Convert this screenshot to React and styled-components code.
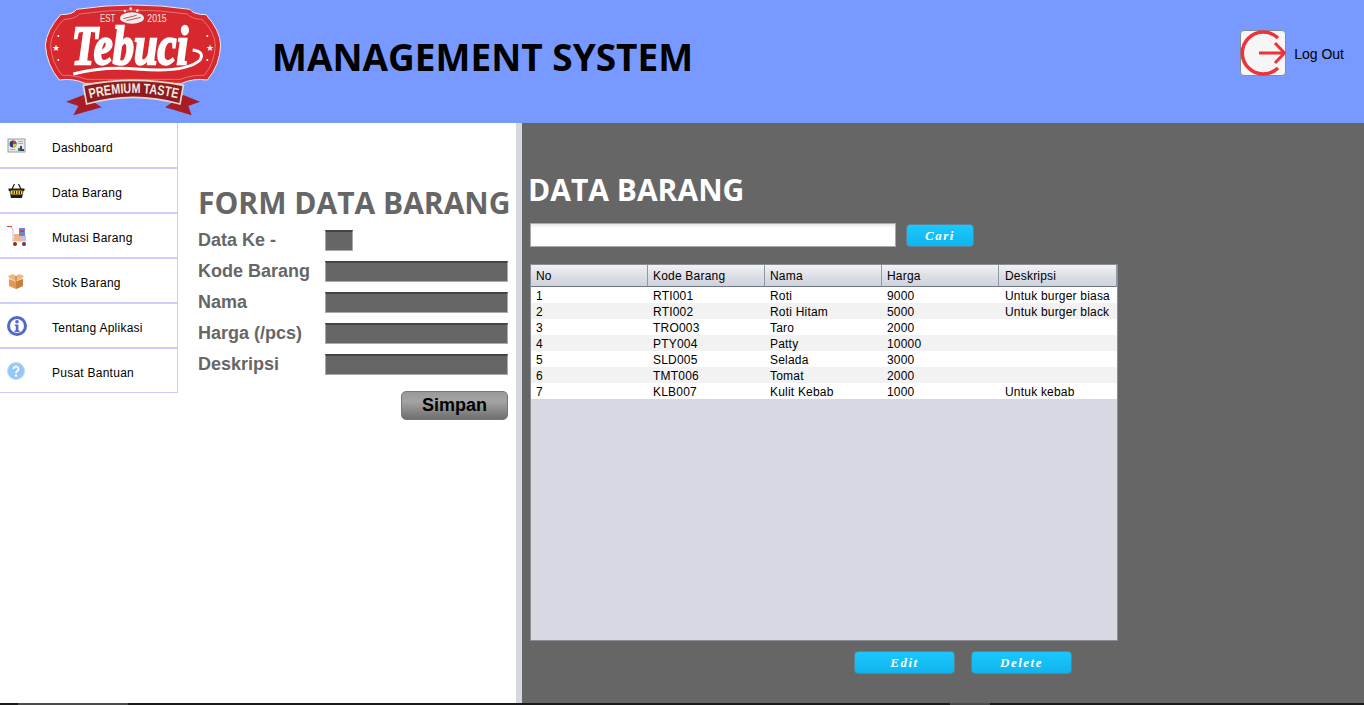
import React from 'react';
import styled, { createGlobalStyle } from 'styled-components';

const GlobalStyle = createGlobalStyle`
html, body {
  margin: 0;
  height: 705px;
  overflow: hidden;
  background: #fff;
  font-family: "Liberation Sans", Arial, sans-serif;
}
`;

const Page = styled.div`
width: 1364px;
height: 705px;
display: flex;
flex-direction: column;
`;

const Header = styled.header`
height: 123px;
flex: none;
display: flex;
align-items: flex-start;
background: #7899ff;
padding-left: 30px;
box-sizing: border-box;
`;

const AppTitle = styled.h1`
margin: 36px 0 0 32px;
font: bold 37px/42px "Open Sans", sans-serif;
color: #000;
white-space: nowrap;
`;

const LogOut = styled.div`
margin: 30px 20px 0 auto;
display: flex;
align-items: center;
gap: 8px;
font-size: 14px;
color: #000;
`;

const LogOutLabel = styled.span`
padding-top: 2px;
`;

const LogOutIcon = styled.div`
width: 46px;
height: 46px;
box-sizing: border-box;
background: #f6f6f6;
border: 1px solid #7f8f99;
border-radius: 4px;
`;

const Main = styled.main`
height: 580px;
flex: none;
display: flex;
`;

const Sidebar = styled.nav`
width: 178px;
flex: none;
align-self: flex-start;
box-sizing: border-box;
padding-top: 1px;
border-right: 1px solid #ccccff;
`;

const NavItem = styled.div`
height: 45px;
box-sizing: border-box;
display: flex;
align-items: center;
padding-top: 1px;
font-size: 12px;
letter-spacing: 0.25px;
color: #000;
border-bottom: 2px solid #ccccff;
&:last-child {
  height: 44px;
  border-bottom-width: 1px;
}
`;

const NavIcon = styled.span`
width: 52px;
flex: none;
padding-left: 7px;
box-sizing: border-box;
display: flex;
`;

const NavLabel = styled.span`
padding-top: 3px;
`;

const FormPanel = styled.section`
width: 338px;
flex: none;
box-sizing: border-box;
padding: 62px 8px 0 20px;
background: #fff;
`;

const FormTitle = styled.h2`
margin: 0 0 9px;
font: bold 30px/36px "Open Sans", sans-serif;
color: #666;
white-space: nowrap;
`;

const FormRow = styled.div`
display: flex;
align-items: center;
height: 21px;
margin-bottom: 10px;
`;

const FormLabel = styled.label`
width: 127px;
flex: none;
font-size: 18px;
font-weight: bold;
color: #666;
white-space: nowrap;
`;

const FormInput = styled.input`
width: ${({ $small }) => ($small ? '28px' : '183px')};
height: 21px;
box-sizing: border-box;
padding: 0;
background: #666;
border: 1px solid #aaa;
border-top: 2px solid #444;
outline: none;
`;

const SaveRow = styled.div`
display: flex;
justify-content: flex-end;
margin-top: 16px;
`;

const SaveButton = styled.button`
width: 107px;
height: 29px;
padding: 0;
font: bold 18px "Liberation Sans", sans-serif;
color: #000;
background: linear-gradient(#999, #a4a4a4 35%, #6e6e6e);
border: 1px solid #777;
border-radius: 5px;
`;

const Divider = styled.div`
width: 6px;
flex: none;
background: #d6d9e2;
`;

const DataPanel = styled.section`
flex: 1;
box-sizing: border-box;
padding: 49px 0 0 8px;
background: #666;
`;

const DataTitle = styled.h2`
margin: 0 0 15px -2px;
font: bold 30px/36px "Open Sans", sans-serif;
color: #fff;
white-space: nowrap;
`;

const SearchRow = styled.div`
display: flex;
align-items: center;
gap: 10px;
height: 24px;
margin-bottom: 17px;
`;

const SearchInput = styled.input`
width: 366px;
height: 24px;
box-sizing: border-box;
padding: 0;
background: linear-gradient(#e8e8e8, #fff 4px);
border: 1px solid #aaa;
outline: none;
`;

const BlueButton = styled.button`
width: ${({ $width }) => $width}px;
height: 23px;
padding: 1px 0 0;
font: italic bold 13px "Liberation Serif", serif;
letter-spacing: 1.5px;
color: #fff;
background: linear-gradient(#1ac8ff, #10b4ec);
border: 1px solid #5c8296;
border-radius: 4px;
`;

const TableBox = styled.div`
width: 588px;
height: 377px;
box-sizing: border-box;
background: #d6d9e2;
border: 1px solid #8c8c96;
`;

const Table = styled.table`
width: 586px;
table-layout: fixed;
border-collapse: separate;
border-spacing: 0;
font-size: 12px;
letter-spacing: 0.2px;
color: #000;
`;

const HeadCell = styled.th`
width: 117px;
height: 22px;
box-sizing: border-box;
padding: 0 0 0 5px;
text-align: left;
font-weight: normal;
white-space: nowrap;
background: linear-gradient(#f1f2f5, #dcdee5 55%, #cfd2db);
border-right: 1px solid #8d99a6;
border-bottom: 1px solid #6c7683;
&:last-child {
  width: 118px;
  padding-left: 6px;
}
`;

const Row = styled.tr`
height: 16px;
background: ${({ $odd }) => ($odd ? '#f2f2f2' : '#fff')};
`;

const Cell = styled.td`
padding: 2px 0 0 5px;
white-space: nowrap;
overflow: hidden;
line-height: 14px;
&:last-child {
  padding-left: 6px;
}
`;

const TableActions = styled.div`
display: flex;
gap: 16px;
margin: 10px 0 0 324px;
`;

const Taskbar = styled.footer`
height: 2px;
flex: none;
display: flex;
background: #1a1a1a;
`;

const TaskSlot = styled.span`
width: ${({ $width }) => $width}px;
margin-left: ${({ $left }) => $left}px;
background: #4a4a4a;
`;

const DashboardIcon = () => (
  <svg width="20" height="16" viewBox="0 0 20 16">
    <rect x="1" y="1" width="17" height="13" fill="#e9e9e9" stroke="#9a9a9a" />
    <circle cx="6" cy="6" r="3.5" fill="#2f3f7a" />
    <path d="M6 6V2.5A3.5 3.5 0 0 1 9.5 6z" fill="#d33" />
    <path d="M6 6h3.5A3.5 3.5 0 0 1 6 9.5z" fill="#e2c033" />
    <rect x="11" y="3" width="5" height="1" fill="#aaa" />
    <rect x="11" y="5" width="5" height="1" fill="#aaa" />
    <rect x="11" y="10" width="2" height="3" fill="#3a8a4a" />
    <rect x="13" y="8" width="2" height="5" fill="#333f8a" />
    <rect x="15" y="11" width="2" height="2" fill="#444" />
    <rect x="3" y="11" width="5" height="1" fill="#aaa" />
  </svg>
);

const BasketIcon = () => (
  <svg width="19" height="16" viewBox="0 0 19 16">
    <path d="M5 6L7.5 1M14 6L11.500 1" stroke="#222" strokeWidth="1.2" fill="none" />
    <path d="M1.500 5.500h16v2l-1 .500-1.500 7H4l-1.500-7-1-.5z" fill="#1d1d1d" />
    <rect x="3.500" y="7.500" width="12" height="4" rx="1" fill="#f4cf2d" />
    <path d="M6 8v3M8.500 8v3M11 8v3M13.500 8v3" stroke="#1d1d1d" />
  </svg>
);

const CartIcon = () => (
  <svg width="22" height="22" viewBox="0 0 22 22">
    <rect x="0" y="1" width="5" height="1" fill="#e23b3b" />
    <path d="M4 2l2 3v11h13" stroke="#c8ccd8" strokeWidth="1.200" fill="none" />
    <rect x="7" y="9" width="8" height="7" fill="#f0b588" />
    <rect x="12" y="3" width="6" height="8" fill="#6a86d8" />
    <rect x="13" y="5" width="4" height="2" fill="#e23b3b" />
    <rect x="15" y="11" width="4" height="5" fill="#b4c6ea" />
    <circle cx="8" cy="19" r="2" fill="#8c2a33" />
    <circle cx="17" cy="19" r="2" fill="#8c2a33" />
  </svg>
);

const BoxIcon = () => (
  <svg width="18" height="16" viewBox="0 0 18 16">
    <path d="M2 6l7 2.500L16 6v7l-7 3-7-3z" fill="#e09a55" />
    <path d="M9 8.500L16 6v7l-7 3z" fill="#c9803c" />
    <path d="M1 3l5-2 3 2 3-2 5 2-2.500 3L9 8 3.500 6z" fill="#f0b67c" />
    <path d="M9 3v5" stroke="#b97636" />
  </svg>
);

const InfoIcon = () => (
  <svg width="20" height="20" viewBox="0 0 20 20">
    <circle cx="10" cy="10" r="8.500" fill="#fff" stroke="#5468c8" strokeWidth="3" />
    <circle cx="10" cy="5.800" r="1.800" fill="#5468c8" />
    <path d="M7.800 8.500h3.600v6h1.200V16H7.500v-1.500h1.300V10H7.800z" fill="#5468c8" />
  </svg>
);

const HelpIcon = () => (
  <svg width="18" height="18" viewBox="0 0 18 18">
    <circle cx="9" cy="9" r="8.500" fill="#93c8f8" stroke="#b9dcfb" />
    <path d="M6.500 7a2.500 2.500 0 1 1 3.800 2.100c-.9.600-1.300 1-1.300 2.100" stroke="#fff" strokeWidth="1.800" fill="none" />
    <circle cx="9" cy="13.500" r="1.200" fill="#fff" />
  </svg>
);

const LogoutGlyph = () => (
  <svg width="46" height="46" viewBox="0 0 46 46" style={{ display: 'block', margin: '-1px', overflow: 'visible' }}>
    <path d="M38 8A21 21 0 1 0 38 38" stroke="#ee3338" strokeWidth="3.500" fill="none" />
    <path d="M19 23h24M35 13l9.500 10L35 33" stroke="#ee3338" strokeWidth="3" fill="none" />
  </svg>
);

// coordinates follow the 3x crop of the header
const Logo = () => (
  <svg width="210" height="123" viewBox="0 0 630 369">
    <path d="M140 28Q310 2 480 28Q490 44 528 44Q570 90 572 135Q570 195 532 240Q490 234 455 250L165 250Q130 234 88 240Q50 195 46 135Q50 90 92 44Q130 44 140 28z" fill="#d6282e" stroke="#f3e8e0" strokeWidth="3" />
    <path d="M148 42Q310 18 472 42Q486 58 516 58Q554 95 556 135Q554 188 523 226Q490 224 450 238H170Q130 224 97 226Q64 188 62 135Q64 95 102 58Q134 58 148 42z" fill="none" stroke="#ec9a90" strokeWidth="2" />
    <path d="M160 285L108 305L145 318L130 346L215 322z" fill="#a81c26" />
    <path d="M460 285L510 305L475 318L485 346L405 322z" fill="#a81c26" />
    <path d="M160 256Q310 226 460 256L450 312Q310 272 170 312z" fill="#8f1a22" stroke="#e8d9c8" strokeWidth="5" />
    <ellipse cx="306" cy="54" rx="36" ry="17" fill="#eee" />
    <path d="M280 56l40-10M290 62l42-10" stroke="#c65050" strokeWidth="3" />
    <circle cx="285" cy="33" r="4" fill="#eee" />
    <circle cx="302" cy="26" r="4" fill="#eee" />
    <circle cx="322" cy="32" r="4" fill="#eee" />
    <text x="210" y="66" fontFamily="Liberation Sans" fontSize="30" fill="#f3e6da" textLength="46" lengthAdjust="spacingAndGlyphs">EST</text>
    <text x="352" y="66" fontFamily="Liberation Sans" fontSize="30" fill="#f3e6da" textLength="58" lengthAdjust="spacingAndGlyphs">2015</text>
    <text x="125" y="192" fontFamily="Liberation Serif" fontStyle="italic" fontWeight="bold" fontSize="165" fill="#fff" stroke="#fff" strokeWidth="7" textLength="350" lengthAdjust="spacingAndGlyphs">Tebuci</text>
    <path d="M130 222Q220 198 330 208Q470 218 510 180Q525 155 488 150" fill="none" stroke="#fff" strokeWidth="9" />
    <text x="66" y="152" fontSize="26" fill="#fff">★</text>
    <text x="528" y="154" fontSize="26" fill="#fff">★</text>
    <circle cx="85" cy="108" r="3" fill="#fff" />
    <circle cx="85" cy="180" r="3" fill="#fff" />
    <circle cx="532" cy="108" r="3" fill="#fff" />
    <circle cx="532" cy="180" r="3" fill="#fff" />
    <path id="logo-arc" d="M180 296Q310 262 445 296" fill="none" />
    <text fontFamily="Liberation Sans" fontWeight="bold" fontSize="42" fill="#f6e9dc">
      <textPath href="#logo-arc" textLength="265" lengthAdjust="spacingAndGlyphs">PREMIUM TASTE</textPath>
    </text>
  </svg>
);

const navItems = [
  { label: 'Dashboard', icon: <DashboardIcon /> },
  { label: 'Data Barang', icon: <BasketIcon /> },
  { label: 'Mutasi Barang', icon: <CartIcon /> },
  { label: 'Stok Barang', icon: <BoxIcon /> },
  { label: 'Tentang Aplikasi', icon: <InfoIcon /> },
  { label: 'Pusat Bantuan', icon: <HelpIcon /> },
];

const formFields = [
  { label: 'Data Ke -', small: true },
  { label: 'Kode Barang' },
  { label: 'Nama' },
  { label: 'Harga (/pcs)' },
  { label: 'Deskripsi' },
];

const columns = ['No', 'Kode Barang', 'Nama', 'Harga', 'Deskripsi'];

const rows = [
  ['1', 'RTI001', 'Roti', '9000', 'Untuk burger biasa'],
  ['2', 'RTI002', 'Roti Hitam', '5000', 'Untuk burger black'],
  ['3', 'TRO003', 'Taro', '2000', ''],
  ['4', 'PTY004', 'Patty', '10000', ''],
  ['5', 'SLD005', 'Selada', '3000', ''],
  ['6', 'TMT006', 'Tomat', '2000', ''],
  ['7', 'KLB007', 'Kulit Kebab', '1000', 'Untuk kebab'],
];

const App = () => (
  <Page>
    <GlobalStyle />
    <Header>
      <Logo />
      <AppTitle>MANAGEMENT SYSTEM</AppTitle>
      <LogOut>
        <LogOutIcon><LogoutGlyph /></LogOutIcon>
        <LogOutLabel>Log Out</LogOutLabel>
      </LogOut>
    </Header>
    <Main>
      <Sidebar>
        {navItems.map((item) => (
          <NavItem key={item.label}>
            <NavIcon>{item.icon}</NavIcon>
            <NavLabel>{item.label}</NavLabel>
          </NavItem>
        ))}
      </Sidebar>
      <FormPanel>
        <FormTitle>FORM DATA BARANG</FormTitle>
        {formFields.map((field) => (
          <FormRow key={field.label}>
            <FormLabel>{field.label}</FormLabel>
            <FormInput $small={field.small} readOnly />
          </FormRow>
        ))}
        <SaveRow>
          <SaveButton type="button">Simpan</SaveButton>
        </SaveRow>
      </FormPanel>
      <Divider />
      <DataPanel>
        <DataTitle>DATA BARANG</DataTitle>
        <SearchRow>
          <SearchInput readOnly />
          <BlueButton type="button" $width={68}>Cari</BlueButton>
        </SearchRow>
        <TableBox>
          <Table>
            <thead>
              <tr>
                {columns.map((col) => <HeadCell key={col}>{col}</HeadCell>)}
              </tr>
            </thead>
            <tbody>
              {rows.map((row, i) => (
                <Row key={row[0]} $odd={i % 2 === 1}>
                  {row.map((value, j) => <Cell key={columns[j]}>{value}</Cell>)}
                </Row>
              ))}
            </tbody>
          </Table>
        </TableBox>
        <TableActions>
          <BlueButton type="button" $width={101}>Edit</BlueButton>
          <BlueButton type="button" $width={101}>Delete</BlueButton>
        </TableActions>
      </DataPanel>
    </Main>
    <Taskbar>
      <TaskSlot $left={18} $width={110} />
      <TaskSlot $left={822} $width={40} />
    </Taskbar>
  </Page>
);

export default App;
